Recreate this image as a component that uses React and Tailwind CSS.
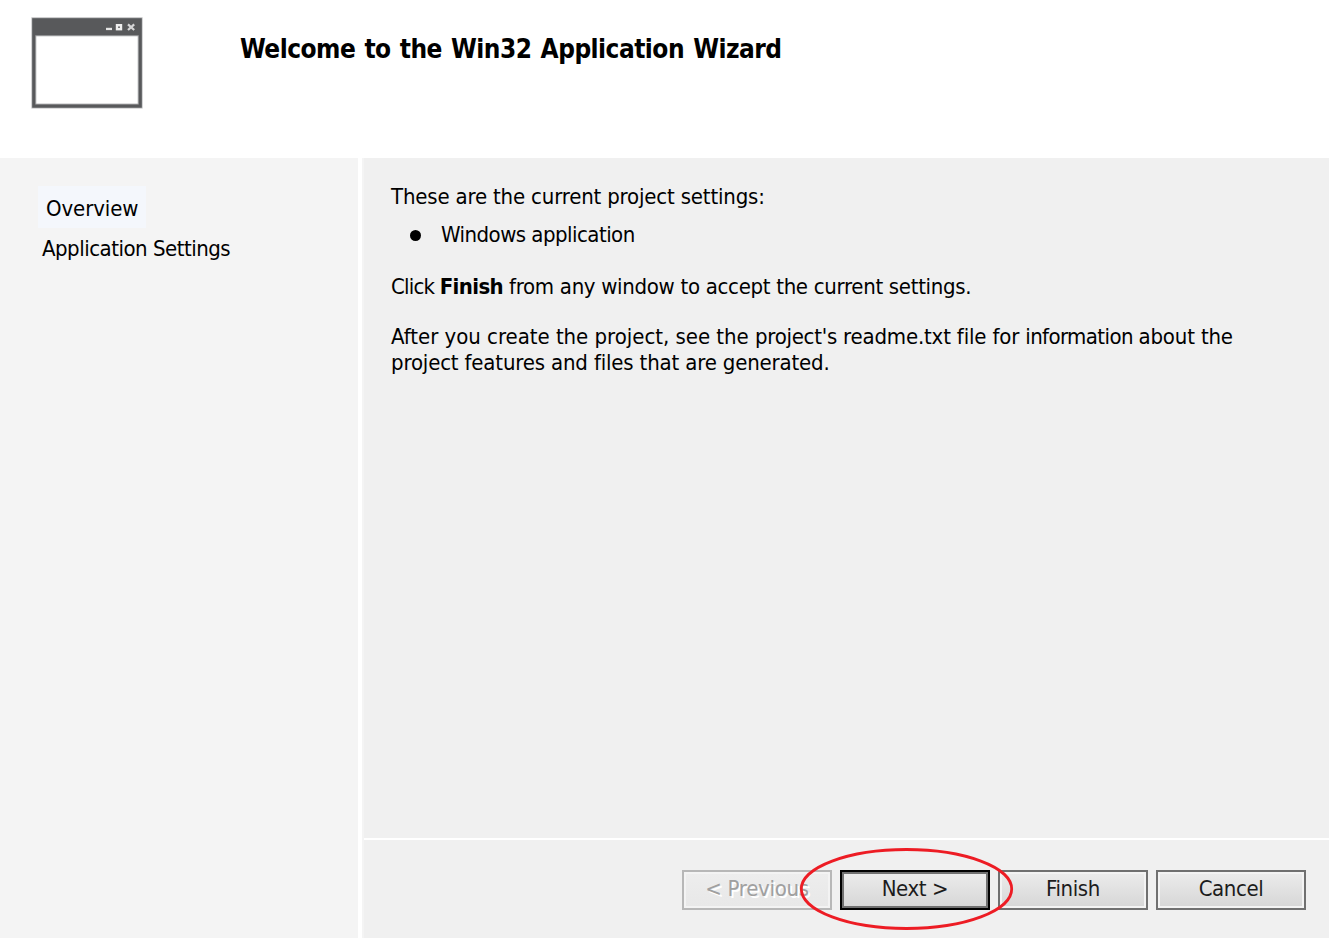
function WindowIcon() {
  return (
    <svg className="block h-[92px] w-[112px]" viewBox="31 17 112 92">
      <rect x="31.4" y="17.3" width="111.2" height="91.2" fill="#b9babb" />
      <rect x="32.2" y="18.2" width="109.6" height="89.5" fill="#58595b" />
      <rect x="35.3" y="35.3" width="103.4" height="69.2" fill="#a9aaab" />
      <rect x="36.3" y="36.3" width="101.4" height="67.3" fill="#fff" />
      <rect x="106" y="27.8" width="6" height="2.3" fill="#e4e4e4" />
      <rect x="117" y="25.2" width="4" height="4" fill="none" stroke="#efefef" strokeWidth="2.4" />
      <path d="M128 24.4l6.2 5.6M134.2 24.4l-6.2 5.6" stroke="#d6d6d7" strokeWidth="2.2" fill="none" />
    </svg>
  );
}

function WizardButton({ children, className, face = "from-[#ebebeb] to-[#d7d7d7]" }) {
  return (
    <button className={`h-10 w-[150px] border-2 p-0.5 ${className}`}>
      <span className={`flex h-full items-center justify-center bg-linear-to-b pb-[3px] ${face}`}>
        {children}
      </span>
    </button>
  );
}

export default function App() {
  return (
    <div className="flex h-[938px] w-[1329px] flex-col overflow-hidden bg-white font-['DejaVu_Sans_Condensed','DejaVu_Sans',sans-serif] text-[22px] leading-[26px] text-black">
      <header className="flex h-[158px] shrink-0 items-start pl-[31px] pt-[17px]">
        <WindowIcon />
        <h1 className="ml-[97px] mt-[17px] whitespace-nowrap text-[26px] font-bold leading-[30px] tracking-[-0.52px] [word-spacing:1.5px]">
          Welcome to the Win32 Application Wizard
        </h1>
      </header>

      <div className="flex min-h-0 flex-1">
        <nav className="flex w-[358px] shrink-0 flex-col items-start bg-[#f4f4f4] pl-[38px] pt-7">
          <div className="h-[42px] w-[108px] bg-[#f4f7fc] pl-2 pt-2.5 tracking-[-0.1px]">Overview</div>
          <div className="ml-1 mt-[7px] whitespace-nowrap pt-px tracking-[-0.5px]">Application Settings</div>
        </nav>

        <div className="ml-1 flex flex-1 flex-col border-l-2 border-[#f4f4f4] bg-[#f0f0f0]">
          <main className="h-[680px] whitespace-nowrap pl-[27px] pt-[26px]">
            <p className="tracking-[-0.18px]">These are the current project settings:</p>
            <ul className="mt-3">
              <li className="flex items-center tracking-[-0.53px]">
                <span className="ml-[19px] mr-5 mt-px size-[11px] rounded-full bg-black" />
                Windows application
              </li>
            </ul>
            <p className="mt-[26px] tracking-[-0.31px]">
              <span className="tracking-[-0.8px]">Click </span>
              <b className="tracking-[-0.6px]">Finish</b> from any window to accept the current settings.
            </p>
            <p className="mt-6 tracking-[-0.17px]">
              <span className="tracking-[-0.03px]">After you create the project, see the </span>
              <span className="tracking-[-0.27px]">project's </span>
              readme.txt file for <span className="tracking-[-0.6px]">information </span>about the
              <br />
              project features and files that are generated.
            </p>
          </main>

          <footer className="relative flex flex-1 items-start justify-end gap-2 border-t-2 border-white pr-[23px] pt-[30px] tracking-[-0.4px] text-[#1c1c1c]">
            <WizardButton
              className="border-[#b7b7b7] bg-[#f3f3f3] text-[#a0a0a0] [text-shadow:2px_2px_0_#fff]"
              face="from-[#ededed] to-[#e8e8e8]"
            >
              <span className="tracking-[-0.3px]">&lt; Previous</span>
            </WizardButton>
            <WizardButton className="border-black bg-[#707070]">Next &gt;</WizardButton>
            <WizardButton className="border-[#707070] bg-[#f3f3f3]">Finish</WizardButton>
            <WizardButton className="border-[#707070] bg-[#f3f3f3]">Cancel</WizardButton>
            <svg className="pointer-events-none absolute right-[315px] top-[7px] h-[84px] w-[215px]" viewBox="0 0 215 84">
              <ellipse cx="107.5" cy="42" rx="105.2" ry="39.5" fill="none" stroke="#ed1c24" strokeWidth="2.8" />
            </svg>
          </footer>
        </div>
      </div>
    </div>
  );
}
